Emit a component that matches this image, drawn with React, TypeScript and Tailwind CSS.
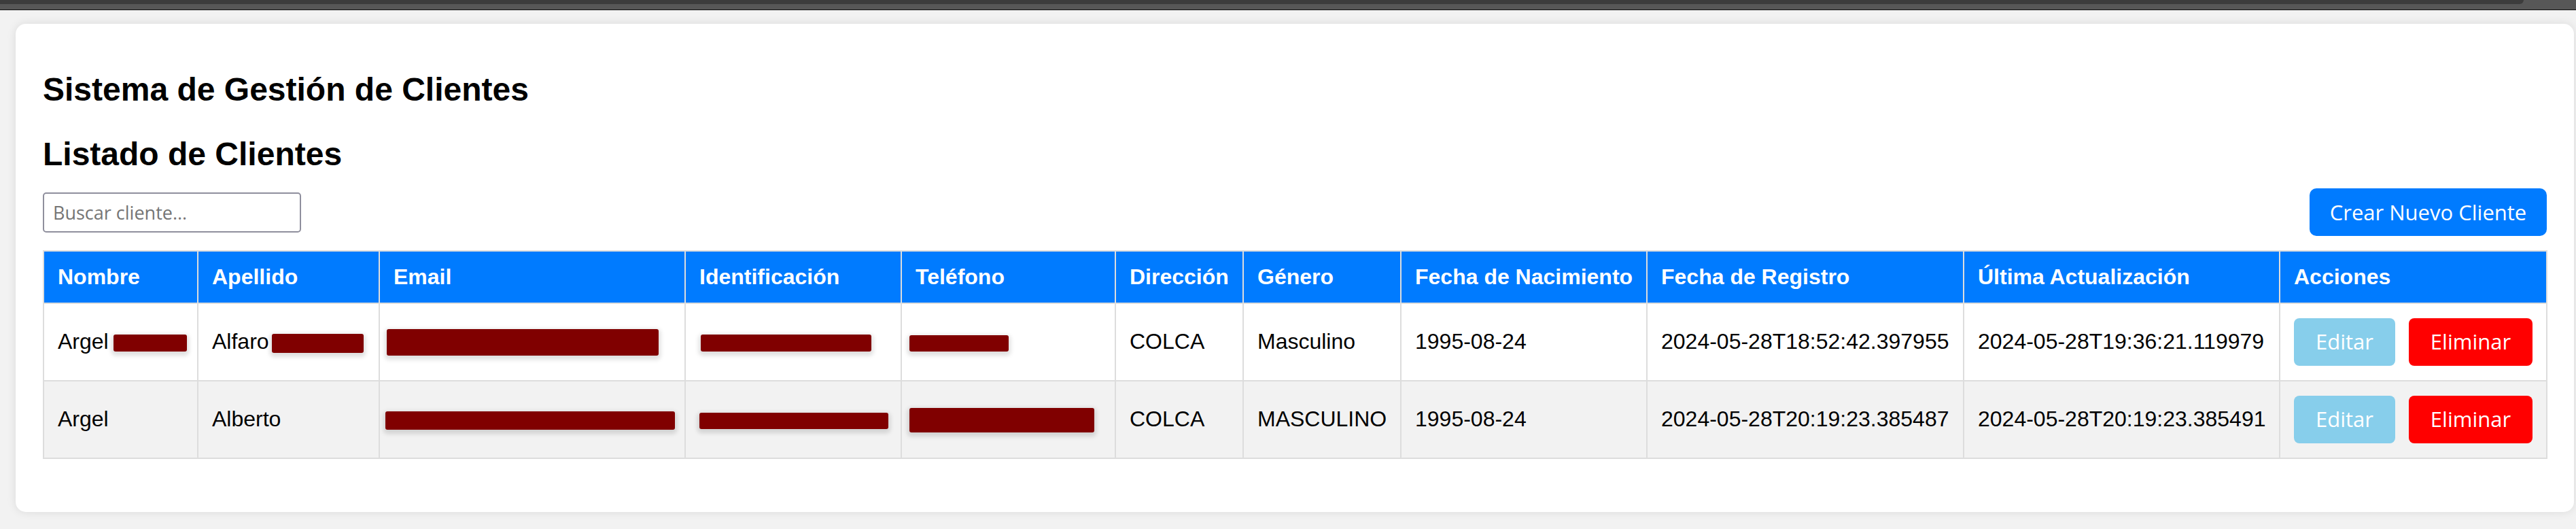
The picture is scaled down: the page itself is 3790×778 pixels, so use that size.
import { FC } from "react";

interface Redact {
  w: number;
  h: number;
  ml?: number;
}

interface Cliente {
  nombre: string;
  nombreTapa?: Redact;
  apellido: string;
  apellidoTapa?: Redact;
  email: Redact;
  identificacion: Redact;
  telefono: Redact;
  direccion: string;
  genero: string;
  nacimiento: string;
  registro: string;
  actualizacion: string;
}

const clientes: Cliente[] = [
  {
    nombre: "Argel",
    nombreTapa: { w: 108, h: 25, ml: 7 },
    apellido: "Alfaro",
    apellidoTapa: { w: 135, h: 28, ml: 4 },
    email: { w: 400, h: 39, ml: -10 },
    identificacion: { w: 251, h: 25, ml: 2 },
    telefono: { w: 146, h: 24, ml: -9 },
    direccion: "COLCA",
    genero: "Masculino",
    nacimiento: "1995-08-24",
    registro: "2024-05-28T18:52:42.397955",
    actualizacion: "2024-05-28T19:36:21.119979",
  },
  {
    nombre: "Argel",
    apellido: "Alberto",
    email: { w: 426, h: 27, ml: -12 },
    identificacion: { w: 278, h: 24, ml: 0 },
    telefono: { w: 272, h: 36, ml: -9 },
    direccion: "COLCA",
    genero: "MASCULINO",
    nacimiento: "1995-08-24",
    registro: "2024-05-28T20:19:23.385487",
    actualizacion: "2024-05-28T20:19:23.385491",
  },
];

const columnas = [
  { titulo: "Nombre", w: 227 },
  { titulo: "Apellido", w: 267 },
  { titulo: "Email", w: 450 },
  { titulo: "Identificación", w: 318 },
  { titulo: "Teléfono", w: 315 },
  { titulo: "Dirección", w: 188 },
  { titulo: "Género", w: 232 },
  { titulo: "Fecha de Nacimiento", w: 362 },
  { titulo: "Fecha de Registro", w: 466 },
  { titulo: "Última Actualización", w: 465 },
  { titulo: "Acciones", w: 393 },
];

const Tapa: FC<{ r: Redact }> = ({ r }) => (
  <span
    className="inline-block align-middle rounded-[3px] bg-[#800000] shadow-[0_3px_6px_3px_rgba(0,0,0,0.13)]"
    style={{ width: r.w, height: r.h, marginLeft: r.ml ?? 0 }}
  />
);

const td = "border-2 border-[#ddd] px-[20px] py-[21px] align-middle whitespace-nowrap";

const App: FC = () => {
  return (
    <div className="min-h-screen bg-[#f2f2f2] font-['Liberation_Sans',Arial,sans-serif] text-black">
      <div className="h-[15px] bg-[#575757] border-b border-[#111]">
        <div className="w-[3713px] h-[6px] bg-[#3c3c3c] rounded-br-[6px]" />
      </div>

      <div className="ml-[23px] mt-[20px] w-[3764px] bg-white rounded-[15px] shadow-[0_0_14px_rgba(0,0,0,0.1)] px-[40px] pt-[69px] pb-[78px]">
        <h2 className="text-[48px] leading-[55px] font-bold">Sistema de Gestión de Clientes</h2>
        <h2 className="mt-[40px] text-[48px] leading-[55px] font-bold">Listado de Clientes</h2>

        <div className="mt-[23px] h-[70px] flex items-center justify-between">
          <input
            className="w-[380px] h-[59px] border-2 border-[#8f8f9d] rounded-[5px] px-[13px] text-[27px] font-['Open_Sans',sans-serif] placeholder:text-[#757575] outline-none"
            placeholder="Buscar cliente..."
          />
          <button className="w-[349px] h-[70px] rounded-[10px] bg-[#007bff] text-white text-[31px] font-['Open_Sans',sans-serif]">
            Crear Nuevo Cliente
          </button>
        </div>

        <table className="mt-[21px] w-[3683px] table-fixed border-collapse border-2 border-[#ddd] text-[32px] leading-[1.15]">
          <colgroup>
            {columnas.map((c) => (
              <col key={c.titulo} style={{ width: c.w }} />
            ))}
          </colgroup>
          <thead>
            <tr className="bg-[#007bff] text-white">
              {columnas.map((c) => (
                <th
                  key={c.titulo}
                  className="border-2 border-[#ddd] px-[20px] py-[19px] text-left font-bold whitespace-nowrap"
                >
                  {c.titulo}
                </th>
              ))}
            </tr>
          </thead>
          <tbody>
            {clientes.map((c, i) => (
              <tr key={i} className={i % 2 === 1 ? "bg-[#f2f2f2]" : "bg-white"}>
                <td className={td}>
                  {c.nombre}
                  {c.nombreTapa && <Tapa r={c.nombreTapa} />}
                </td>
                <td className={td}>
                  {c.apellido}
                  {c.apellidoTapa && <Tapa r={c.apellidoTapa} />}
                </td>
                <td className={td}>
                  <Tapa r={c.email} />
                </td>
                <td className={td}>
                  <Tapa r={c.identificacion} />
                </td>
                <td className={td}>
                  <Tapa r={c.telefono} />
                </td>
                <td className={td}>{c.direccion}</td>
                <td className={td}>{c.genero}</td>
                <td className={td}>{c.nacimiento}</td>
                <td className={td}>{c.registro}</td>
                <td className={td}>{c.actualizacion}</td>
                <td className={td}>
                  <div className="flex gap-[20px] font-['Open_Sans',sans-serif] text-[31px]">
                    <button className="w-[149px] h-[70px] rounded-[8px] bg-[#87ceeb] text-white">
                      Editar
                    </button>
                    <button className="w-[182px] h-[70px] rounded-[8px] bg-[#ff0000] text-white">
                      Eliminar
                    </button>
                  </div>
                </td>
              </tr>
            ))}
          </tbody>
        </table>
      </div>
    </div>
  );
};

export default App;
